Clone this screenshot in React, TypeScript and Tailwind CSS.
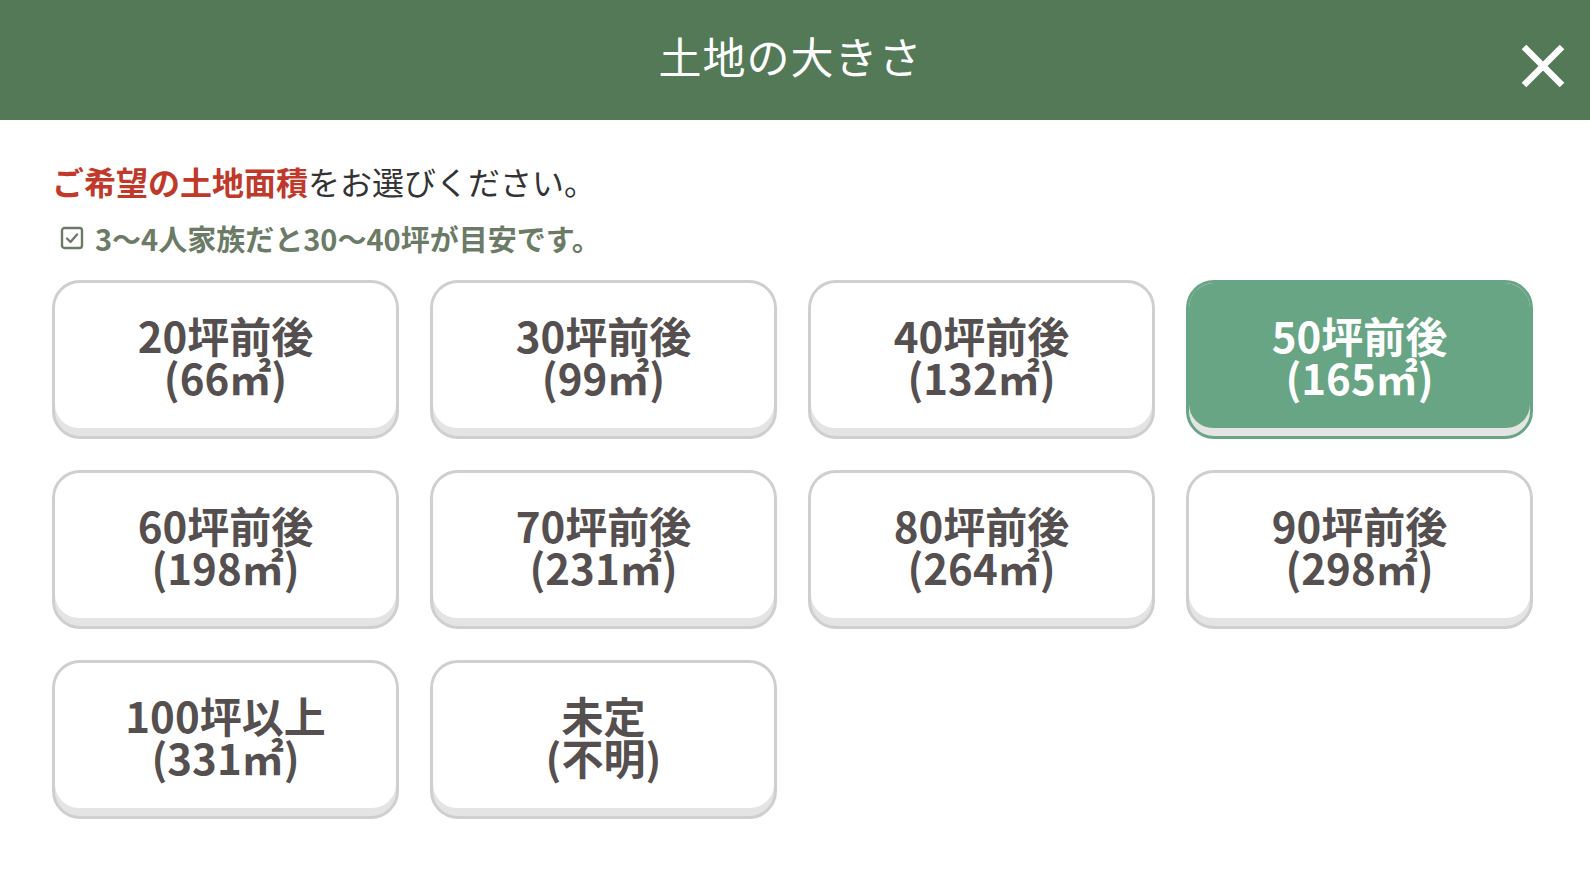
import type { FC } from 'react';

type SizeOption = {
	id: string;
	label: string;
	sub: string;
};

const sizeOptions: SizeOption[] = [
	{ id: '20', label: '20坪前後', sub: '(66㎡)' },
	{ id: '30', label: '30坪前後', sub: '(99㎡)' },
	{ id: '40', label: '40坪前後', sub: '(132㎡)' },
	{ id: '50', label: '50坪前後', sub: '(165㎡)' },
	{ id: '60', label: '60坪前後', sub: '(198㎡)' },
	{ id: '70', label: '70坪前後', sub: '(231㎡)' },
	{ id: '80', label: '80坪前後', sub: '(264㎡)' },
	{ id: '90', label: '90坪前後', sub: '(298㎡)' },
	{ id: '100', label: '100坪以上', sub: '(331㎡)' },
	{ id: 'none', label: '未定', sub: '(不明)' },
];

const selectedId = '50';

const fontStack = { fontFamily: '"Noto Sans CJK JP", "Noto Sans", sans-serif' };

const SizeButton: FC<{ option: SizeOption; selected: boolean }> = function SizeButton({
	option,
	selected,
}) {
	return (
		<button
			type="button"
			className={
				selected
					? 'flex h-[159px] w-[347px] flex-col overflow-hidden rounded-[28px] border-[3px] border-[#67a584] bg-[#e4e4e4]'
					: 'flex h-[159px] w-[347px] flex-col overflow-hidden rounded-[28px] border-[3px] border-[#cfcfcf] bg-[#e4e4e4]'
			}
		>
			<div
				className={
					selected
						? 'flex h-[145px] w-full flex-col items-center justify-center rounded-b-[24px] bg-[#67a584] pt-[1px] text-white'
						: 'flex h-[145px] w-full flex-col items-center justify-center rounded-b-[24px] bg-white pt-[1px] text-[#554f4f]'
				}
			>
				<span className="text-[42px] leading-[42px] font-bold">{option.label}</span>
				<span className="text-[42px] leading-[42px] font-bold">{option.sub}</span>
			</div>
		</button>
	);
};

export default function App() {
	return (
		<div className="min-h-[882px] w-full bg-white" style={fontStack}>
			<header className="flex h-[120px] items-center bg-[#547957]">
				<div className="flex flex-1 justify-center pr-[90px] pl-[150px]">
					<h1 className="pb-[10px] text-[43px] leading-none font-normal tracking-[1px] text-white">
						土地の大きさ
					</h1>
				</div>
				<button
					type="button"
					className="mt-[12px] mr-[25px] flex h-[44px] w-[44px] items-center justify-center"
				>
					<svg viewBox="0 0 44 44" className="h-[44px] w-[44px]">
						<path d="M3 3 L41 41 M41 3 L3 41" stroke="white" strokeWidth="6.5" strokeLinecap="butt" />
					</svg>
				</button>
			</header>

			<main className="pt-[41px] pl-[52px]">
				<p className="text-[32px] leading-[40px] text-[#333]">
					<span className="font-bold text-[#c0392b]">ご希望の土地面積</span>
					をお選びください。
				</p>
				<div className="mt-[19px] flex items-center gap-[11px] pl-[8px] text-[#6b7b66]">
					<svg viewBox="0 0 24 24" className="h-[24px] w-[24px]">
						<rect x="2" y="2" width="20" height="20" rx="2.5" fill="none" stroke="currentColor" strokeWidth="2.4" />
						<path d="M7 12.5 L10.5 16 L17 8.5" fill="none" stroke="currentColor" strokeWidth="2.4" strokeLinecap="round" strokeLinejoin="round" />
					</svg>
					<span className="text-[29px] leading-[36px] font-bold">3〜4人家族だと30〜40坪が目安です。</span>
				</div>

				<div className="mt-[24px] grid grid-cols-[repeat(4,347px)] gap-x-[31px] gap-y-[31px]">
					{sizeOptions.map((option) => (
						<SizeButton key={option.id} option={option} selected={option.id === selectedId} />
					))}
				</div>
			</main>
		</div>
	);
}
